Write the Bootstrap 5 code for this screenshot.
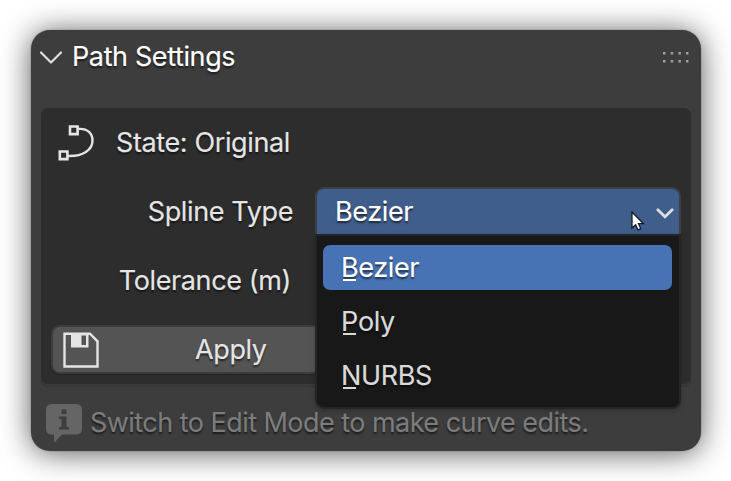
<!DOCTYPE html>
<html lang="en">
<head>
<meta charset="utf-8">
<meta name="viewport" content="width=device-width, initial-scale=1">
<title>Path Settings</title>
<link href="https://cdn.jsdelivr.net/npm/bootstrap@5.3.0/dist/css/bootstrap.min.css" rel="stylesheet">
<style>
body{background:#fff;font-family:Inter,"Liberation Sans",sans-serif;font-size:27px;line-height:32px;letter-spacing:-.38px;-webkit-text-stroke:.15px currentColor;color:#e5e5e5;padding:30px 30px 0 31px;height:481px;overflow:hidden}
svg{display:block;flex:none}
.panel{width:670px;height:421px;background:#3d3d3d;border-radius:19px;padding:0 10px;box-shadow:0 2px 30px rgba(0,0,0,.65),0 0 2px rgba(0,0,0,.3);text-shadow:0 2px 2px rgba(0,0,0,.6)}
.panel-head{height:54px;color:#fff}
.head-arrow{margin-left:-1px}
.head-grip{margin-right:2px}
.head-label{margin-left:10px}
.box{height:276px;margin-top:24px;background:#2d2d2d;border-radius:7px;box-shadow:0 2px 0 #393939,0 3px 0 #343434;padding:10px}
.state-row{height:50px;padding-left:7px}
.state-label{margin-left:21px}
.field-row{height:48px;margin-top:19px}
.tol-row{margin-top:22px}
.field-label{width:264px;padding:2px 22px 0 0}
.tol-label{padding:0 24px 0 0}
.select-box{width:366px;height:48px;background:#405e8b;border:2px solid #3c3f44;border-bottom:0;border-radius:9px 9px 0 0;color:#fff;padding:0 5px 0 18px}
.select-arrow{margin-top:2px}
.menu{position:absolute;top:47px;left:0;width:366px;height:175px;background:#181818;border:2px solid #242424;border-radius:0 0 9px 9px;padding:9px 7px 0 6px;z-index:3;box-shadow:0 2px 5px rgba(0,0,0,.2);color:#d9d9d9}
.choice{height:45px;margin-bottom:9px;padding-left:18px;border-radius:7px}
.choice.current{background:#4772b3;color:#fff}
.key{position:relative}
.key::after{content:"";position:absolute;left:2px;width:13px;height:2px;top:28px;background:currentColor}
.pointer{position:absolute;left:316px;top:24px}
.apply{width:630px;height:49px;margin-top:20px;background:#545454;border:2px solid #3d3d3d;border-radius:9px;padding:0 10px;box-shadow:0 1px 1px #242424}
.apply-label{margin-left:95px}
.hint{height:67px;padding:11px 5px 0;color:#7c7c7c;letter-spacing:-.54px}
.hint-label{margin-left:8px}
</style>
</head>
<body>
<main class="panel">
  <header class="panel-head d-flex align-items-center">
    <svg class="head-arrow" width="22" height="14" viewBox="0 0 22 14" fill="none" stroke="#dedede" stroke-width="2.200" stroke-linecap="round" stroke-linejoin="round"><path d="M1 2.500 11 12.500 21 2.500"/></svg>
    <span class="head-label">Path Settings</span>
    <svg class="head-grip ms-auto" width="26" height="11" fill="#a0a0a0"><path d="M0 0h2.500v2.500h-2.500zM7.700 0h2.500v2.500h-2.500zM15.400 0h2.500v2.500h-2.500zM23 0h2.500v2.500h-2.500zM0 8h2.500v2.500h-2.500zM7.700 8h2.500v2.500h-2.500zM15.400 8h2.500v2.500h-2.500zM23 8h2.500v2.500h-2.500z"/></svg>
  </header>
  <section class="box">
    <div class="state-row d-flex align-items-center">
      <svg width="37" height="36" viewBox="0 0 37 36" fill="none" stroke="#e5e5e5"><path stroke-width="2.400" d="M20 4C30 3 34.500 9 34.500 15.500C34.500 25 25 31.500 10 31"/><path stroke-width="2.600" d="M12 1.500h7.600v7.600h-7.600zM1.800 26.500h7.600v7.600H1.800z" fill="#2d2d2d"/></svg>
      <span class="state-label">State: Original</span>
    </div>
    <div class="field-row d-flex align-items-center">
      <span class="field-label text-end">Spline Type</span>
      <div class="position-relative">
        <div class="select-box d-flex align-items-center justify-content-between">
          <span>Bezier</span>
          <svg class="select-arrow" width="18" height="12" viewBox="0 0 18 12" fill="none" stroke="#dedede" stroke-width="2.700"><path d="M1 2 9 9.800 17 2"/></svg>
        </div>
        <svg class="pointer" width="14" height="21" viewBox="0 0 14 21" fill="#fff" stroke="#10182b" stroke-width="1.300"><path d="M1 1V17L4.600 13.800 7 18.800 9.700 17.600 7.500 12.700H12.500Z"/></svg>
        <div class="menu">
          <div class="choice current d-flex align-items-center"><span><span class="key">B</span>ezier</span></div>
          <div class="choice d-flex align-items-center"><span><span class="key">P</span>oly</span></div>
          <div class="choice d-flex align-items-center"><span><span class="key">N</span>URBS</span></div>
        </div>
      </div>
    </div>
    <div class="field-row tol-row d-flex align-items-center">
      <span class="field-label tol-label text-end">Tolerance (m)</span>
    </div>
    <div class="apply d-flex align-items-center">
      <svg width="37" height="36" viewBox="0 0 37 36"><path d="M1.500 1.700h25.500L34.500 9.300V34.500H1.500z" fill="none" stroke="#e5e5e5" stroke-width="2.400"/><path fill="#e5e5e5" fill-rule="evenodd" d="M8 1h17.500v14.500H8zM18.500 3.500h4.500V13H18.500z"/></svg>
      <span class="apply-label">Apply</span>
    </div>
  </section>
  <footer class="hint d-flex align-items-center">
    <svg width="36" height="38" viewBox="0 0 36 38"><path fill="#656565" d="M6 0H30Q36 0 36 6V24.500Q36 30.500 30 30.500H16L9 38H8V30.500H6Q0 30.500 0 24.500V6Q0 0 6 0Z"/><path fill="#3d3d3d" d="M15.500 5.500h5v4.500h-5zM13 12.500h7.500V23H23v2.500H13V23h2.500v-8H13z"/></svg>
    <span class="hint-label">Switch to Edit Mode to make curve edits.</span>
  </footer>
</main>
<script src="https://cdn.jsdelivr.net/npm/bootstrap@5.3.0/dist/js/bootstrap.bundle.min.js"></script>
</body>
</html>
